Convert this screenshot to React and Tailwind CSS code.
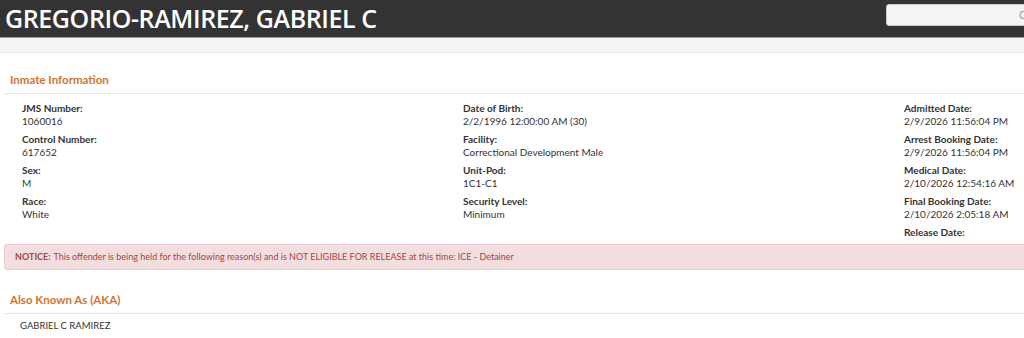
import React from "react";

const col1 = [
  ["JMS Number:", "1060016"],
  ["Control Number:", "617652"],
  ["Sex:", "M"],
  ["Race:", "White"],
];
const col2 = [
  ["Date of Birth:", "2/2/1996 12:00:00 AM (30)"],
  ["Facility:", "Correctional Development Male"],
  ["Unit-Pod:", "1C1-C1"],
  ["Security Level:", "Minimum"],
];
const col3 = [
  ["Admitted Date:", "2/9/2026 11:56:04 PM"],
  ["Arrest Booking Date:", "2/9/2026 11:56:04 PM"],
  ["Medical Date:", "2/10/2026 12:54:16 AM"],
  ["Final Booking Date:", "2/10/2026 2:05:18 AM"],
  ["Release Date:", ""],
];

function Field({ label, value }) {
  return (
    <div className="mb-[5px]">
      <div className="font-bold leading-[13px] h-[13px]">{label}</div>
      {value && <div className="leading-[13px] h-[13px]">{value}</div>}
    </div>
  );
}

function Column({ items }) {
  return (
    <div className="pl-[18px]">
      {items.map(([l, v]) => (
        <Field key={l} label={l} value={v} />
      ))}
    </div>
  );
}

export default function App() {
  return (
    <div className="w-[1024px] h-[338px] overflow-hidden bg-white text-[#333] text-[10px]" style={{ fontFamily: "Lato, 'Open Sans', sans-serif" }}>
      <div className="w-[1340px]">
        {/* title bar */}
        <div className="h-[37px] bg-[#333] flex items-center justify-between">
          <h1 className="pl-[5px] text-white text-[25px] font-semibold leading-none tracking-[-0.4px]" style={{ fontFamily: "'Open Sans', sans-serif" }}>
            GREGORIO-RAMIREZ, GABRIEL C
          </h1>
          <div className="mr-[254px] mb-[11px] mt-[4px] self-start w-[200px] h-[22px] rounded-[3px] bg-[#f4f4f4] border border-[#ccc] pl-[132px] text-[11px] text-[#7fb56f] leading-[20px]">
            Clear
          </div>
        </div>
        <div className="h-[16px] bg-[#f4f4f4] border-t border-[#9a9a9a] border-b border-b-[#ebebeb]" />

        {/* inmate info */}
        <div className="ml-[4px] w-[1323px]">
          <div className="pt-[20px] pb-[6px] pl-[6px] text-[11.5px] font-bold text-[#d2742f] leading-[14px] border-b border-[#e5e5e5]">
            Inmate Information
          </div>
          <div className="grid grid-cols-3 pt-[8px]">
            <Column items={col1} />
            <Column items={col2} />
            <Column items={col3} />
          </div>
          <div className="h-[26px] flex items-center pl-[10px] bg-[#f2dede] border border-[#ebccd1] rounded-[3px] text-[9px] text-[#a94442]">
            <span className="font-bold mr-[3px]">NOTICE:</span>
            This offender is being held for the following reason(s) and is NOT ELIGIBLE FOR RELEASE at this time: ICE - Detainer
          </div>
          <div className="pt-[23px] pb-[6px] pl-[6px] text-[11.5px] font-bold text-[#d2742f] leading-[14px] border-b border-[#e5e5e5]">
            Also Known As (AKA)
          </div>
          <div className="pl-[16px] pt-[5px] text-[9.5px] leading-[13px]">GABRIEL C RAMIREZ</div>
        </div>
      </div>
    </div>
  );
}
